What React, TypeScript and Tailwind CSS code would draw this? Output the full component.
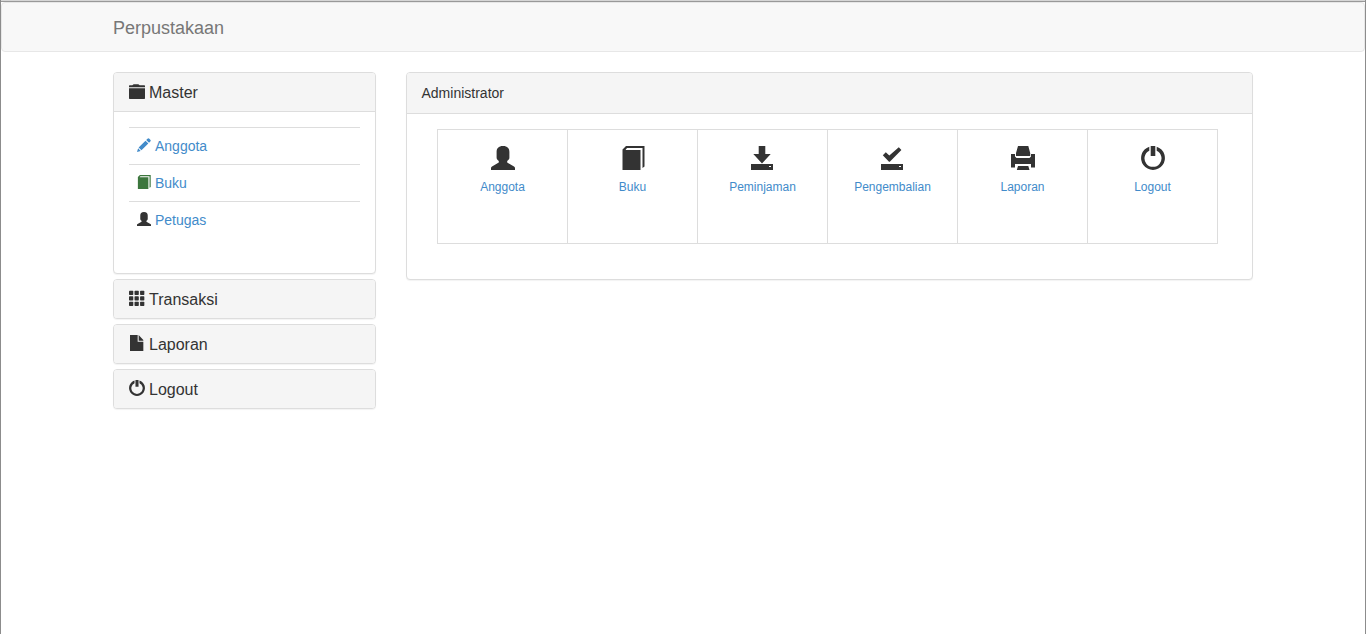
import type { ReactNode } from "react";

type IconName =
  | "folder"
  | "pencil"
  | "book"
  | "user"
  | "grid"
  | "file"
  | "power"
  | "save"
  | "saved"
  | "print";

const drive = "M0 18h22v6H0zM18 20v1h2v-1z";
const gridStops = [0, 8.3, 16.6];

const shapes: Record<IconName, ReactNode> = {
  folder: (
    <path d="M0 4.500q0-1 1-1h4L7 2h7l2 1.500h7q1 0 1 1v2H0zM0 8h24v15q0 1-1 1H1q-1 0-1-1z" />
  ),
  pencil: (
    <path d="M18 1.200q1.600-1.600 3.200 0l1.600 1.600q1.600 1.600 0 3.200l-2.200 2.200-4.800-4.800zM14.600 4.600l4.800 4.800L7.600 21.200 2.800 16.400zM1.900 17.700l4.400 4.400L0 24z" />
  ),
  book: (
    <path d="M5 0h18.500v20.500l-2 1.500V2H6.200L4.800 3.200V4h14.700v20h-18V3.500z" />
  ),
  user: (
    <path d="M12 0c4.500 0 6.400 2.500 6.400 6v5.500c0 1.800-1 2.700-2.200 3.500v1.500L23 20.600c.7.400 1 .8 1 1.500V24H0v-1.900c0-.7.300-1.100 1-1.500l6.800-4.100V15c-1.200-.8-2.200-1.700-2.200-3.500V6C5.600 2.500 7.500 0 12 0z" />
  ),
  grid: gridStops.map((y) =>
    gridStops.map((x) => (
      <rect key={`${x}-${y}`} x={x} y={y + 1.2} width="6.4" height="6.2" rx="1" />
    )),
  ),
  file: <path d="M1.500 0h11.500v10h8.500V24h-20zM14.500 0l7 7.500V8.500h-7z" />,
  power: (
    <>
      <path d="M9.700 0h4.600v10H9.700z" />
      <path d="M8.300 .700v4a8.500 8.500 0 1 0 7.400 0V.700a11.900 11.900 0 1 1-7.400 0z" />
    </>
  ),
  save: <path fillRule="evenodd" d={`M7.700 0h6.600v8h5.400L11 17.500 2.300 8h5.400z${drive}`} />,
  saved: (
    <path
      fillRule="evenodd"
      d={`M17.800 1.200l2.600 2.900L8.800 15.700h-.8L1.800 9.300l3-3 3.500 3.300z${drive}`}
    />
  ),
  print: (
    <path d="M7 0h10.300l1.900 7v3H5V7zM0 8h4v2.500L5.500 12h13l1.500-1.500V8h4v13.500h-4V18H4v3.500H0zM7 20h10.300l1.200 4H5.800z" />
  ),
};

function Icon({ name, className }: { name: IconName; className: string }) {
  return (
    <svg viewBox="0 0 24 24" fill="currentColor" className={className} aria-hidden="true">
      {shapes[name]}
    </svg>
  );
}

const masterLinks: { name: string; icon: IconName; color: string }[] = [
  { name: "Anggota", icon: "pencil", color: "text-[#428bca]" },
  { name: "Buku", icon: "book", color: "text-[#3c763d]" },
  { name: "Petugas", icon: "user", color: "text-[#333]" },
];

const sections: { name: string; icon: IconName }[] = [
  { name: "Transaksi", icon: "grid" },
  { name: "Laporan", icon: "file" },
  { name: "Logout", icon: "power" },
];

const shortcuts: { name: string; icon: IconName }[] = [
  { name: "Anggota", icon: "user" },
  { name: "Buku", icon: "book" },
  { name: "Peminjaman", icon: "save" },
  { name: "Pengembalian", icon: "saved" },
  { name: "Laporan", icon: "print" },
  { name: "Logout", icon: "power" },
];

function Panel({ children }: { children: ReactNode }) {
  return (
    <section className="overflow-hidden rounded-sm border border-[#ddd] bg-white shadow-[0_1px_1px_rgba(0,0,0,0.05)]">
      {children}
    </section>
  );
}

function SectionTitle({ name, icon }: { name: string; icon: IconName }) {
  return (
    <h4 className="bg-[#f5f5f5] px-[15px] pt-[10px] pb-2 text-base leading-5">
      <a href="#" className="flex items-start gap-1">
        <Icon name={icon} className="size-4" />
        {name}
      </a>
    </h4>
  );
}

function Sidebar() {
  return (
    <aside className="flex flex-col gap-[5px] md:col-span-3">
      <Panel>
        <SectionTitle name="Master" icon="folder" />
        <div className="border-t border-[#ddd] px-[15px] pt-[15px] pb-[35px]">
          <ul>
            {masterLinks.map((link) => (
              <li key={link.name} className="border-t border-[#ddd] p-2">
                <a href="#" className="flex items-start gap-1 text-[#428bca]">
                  <Icon name={link.icon} className={`mt-0.5 size-[14px] ${link.color}`} />
                  {link.name}
                </a>
              </li>
            ))}
          </ul>
        </div>
      </Panel>
      {sections.map((section) => (
        <Panel key={section.name}>
          <SectionTitle name={section.name} icon={section.icon} />
        </Panel>
      ))}
    </aside>
  );
}

export default function App() {
  return (
    <div className="min-h-screen border-x border-[#8c8c8c] bg-white font-['Liberation_Sans',Arial,sans-serif] text-sm leading-5 text-[#333]">
      <div className="h-[2px] border-b border-[#999] bg-[#d6d6d6]" />
      <nav className="mb-5 rounded-sm border border-[#e7e7e7] bg-[#f8f8f8]">
        <div className="mx-auto max-w-[1170px] px-[15px] pt-[15px] pb-[13px]">
          <a href="#" className="block w-fit text-lg leading-5 text-[#777]">
            Perpustakaan
          </a>
        </div>
      </nav>

      <main className="mx-auto grid max-w-[1170px] items-start gap-[30px] px-[15px] md:grid-cols-12">
        <Sidebar />
        <div className="md:col-span-9">
          <Panel>
            <h1 className="border-b border-[#ddd] bg-[#f5f5f5] px-[15px] py-[10px]">
              Administrator
            </h1>
            <div className="px-[30px] pt-[15px] pb-[35px]">
              <ul className="flex w-fit flex-wrap border-l border-[#ddd]">
                {shortcuts.map((item) => (
                  <li
                    key={item.name}
                    className="h-[115px] w-[130px] border-y border-r border-[#ddd] pl-px text-xs leading-[18px]"
                  >
                    <a href="#" className="flex flex-col items-center gap-2 pt-4 text-[#428bca]">
                      <Icon name={item.icon} className="size-6 text-[#333]" />
                      {item.name}
                    </a>
                  </li>
                ))}
              </ul>
            </div>
          </Panel>
        </div>
      </main>
    </div>
  );
}
